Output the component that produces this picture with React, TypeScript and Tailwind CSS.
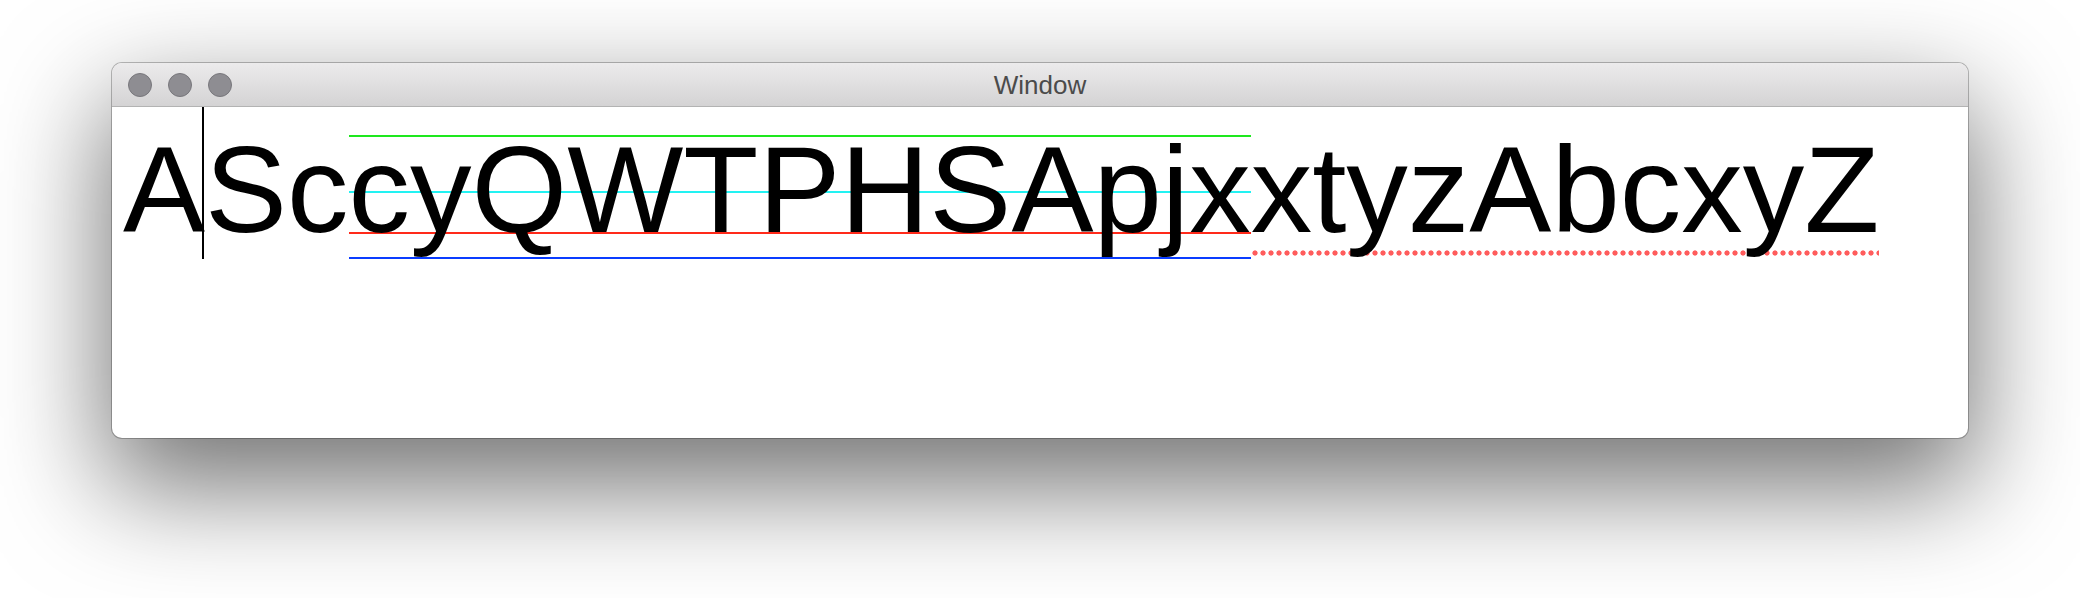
export default function App() {
  return (
    <div className="w-[2080px] h-[598px] bg-white pl-[112px] pt-[63px] overflow-hidden font-['Liberation_Sans',Arial,sans-serif]">
      {/* Window */}
      <div className="w-[1856px] h-[375px] rounded-[10px] overflow-hidden bg-white ring-1 ring-black/25 shadow-[0_44px_110px_6px_rgba(0,0,0,0.55)] flex flex-col">
        {/* Title bar */}
        <div className="h-[44px] shrink-0 grid grid-cols-[1fr_auto_1fr] items-center bg-linear-to-b from-[#ecebec] to-[#d4d3d4] border-b border-[#b3b3b3]">
          <div className="flex items-center gap-[16px] pl-[16px]">
            <span className="w-[24px] h-[24px] rounded-full bg-[#8e8d92] border border-[#78777c]" />
            <span className="w-[24px] h-[24px] rounded-full bg-[#8e8d92] border border-[#78777c]" />
            <span className="w-[24px] h-[24px] rounded-full bg-[#8e8d92] border border-[#78777c]" />
          </div>
          <span className="text-[26px] leading-none text-[#4b4b4b]">Window</span>
          <div />
        </div>

        {/* Content */}
        <div className="flex-1 pl-[11px] pt-[21px]">
          <div className="flex text-[123px] leading-[123px] text-black whitespace-pre">
            <span>A</span>
            {/* caret */}
            <span className="relative w-0">
              <span className="absolute -top-[21px] -left-[3px] w-[2px] h-[152px] bg-black" />
            </span>
            <span>Sc</span>
            {/* metric guides */}
            <span className="relative">
              <span className="absolute left-0 right-0 top-[7px] h-[2px] bg-[#1ee81e]" />
              <span className="absolute left-0 right-0 top-[63px] h-[2px] bg-[#22f2f2]" />
              <span className="absolute left-0 right-0 top-[104px] h-[2px] bg-[#ff2a1a]" />
              <span className="absolute left-0 right-0 top-[129px] h-[2px] bg-[#0a3cff]" />
              <span className="relative">cyQWTPHSApjx</span>
            </span>
            {/* spelling underline */}
            <span className="relative">
              <span className="absolute left-0 right-0 top-[122px] h-[6px] bg-[radial-gradient(circle,#ff5c5c_2.2px,transparent_3px)] bg-[length:8px_6px]" />
              <span className="relative">xtyzAbcxyZ</span>
            </span>
          </div>
        </div>
      </div>
    </div>
  );
}
